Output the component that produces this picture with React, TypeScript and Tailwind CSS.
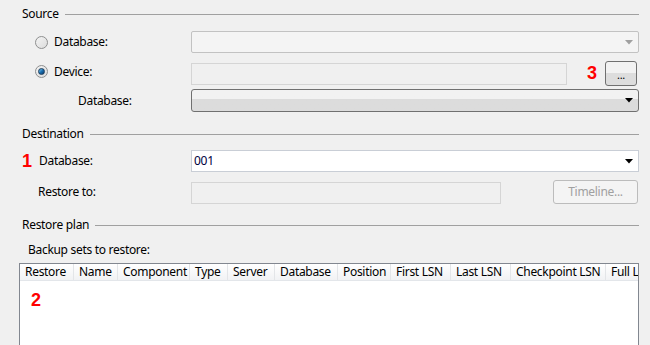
import React from "react";

const font = { fontFamily: '"Noto Sans", "Segoe UI", sans-serif' };

const SectionHeader = ({ title }: { title: string }) => (
    <div className="flex items-center h-[16px] pl-[22px] pr-[11px] gap-[6px]">
        <span className="text-[12px] leading-[16px] text-black">{title}</span>
        <div className="flex-1 h-px bg-[#a0a0a0]" />
    </div>
);

const Arrow = ({ disabled }: { disabled?: boolean }) => (
    <svg width="8" height="5" viewBox="0 0 8 5" className="mr-[5px]">
        <path d="M0 0 H8 L4 4.5 Z" fill={disabled ? "#a0a0a0" : "#000"} />
    </svg>
);

const Radio = ({ checked }: { checked?: boolean }) => (
    <div className="w-[13px] h-[13px] rounded-full border border-[#8e8f8f] bg-gradient-to-br from-[#f4f4f4] to-[#dcdcdc] flex items-center justify-center">
        {checked && <div className="w-[7px] h-[7px] rounded-full bg-gradient-to-br from-[#7ad1f7] via-[#1a6fb0] to-[#0b3a6a] border border-[#1b3c5c]" />}
    </div>
);

const Red = ({ n }: { n: string }) => (
    <span className="text-[18px] leading-[18px] font-bold text-[#ff0000] tracking-normal" style={{ fontFamily: '"Liberation Sans", Arial, sans-serif' }}>{n}</span>
);

const columns = [
    { name: "Restore", w: 54 },
    { name: "Name", w: 44 },
    { name: "Component", w: 72 },
    { name: "Type", w: 38 },
    { name: "Server", w: 47 },
    { name: "Database", w: 63 },
    { name: "Position", w: 53 },
    { name: "First LSN", w: 60 },
    { name: "Last LSN", w: 60 },
    { name: "Checkpoint LSN", w: 95 },
    { name: "Full LSN", w: 80 },
];

export default function App() {
    return (
        <div className="w-[650px] h-[345px] bg-[#f0f0f0] overflow-hidden text-[12px] tracking-[-0.3px] text-black flex flex-col" style={font}>
            <div className="mt-[6px]">
                <SectionHeader title="Source" />
            </div>

            <div className="mt-[9px] flex items-center h-[22px] pr-[11px]">
                <div className="w-[191px] flex items-center pl-[35px] gap-[6px]">
                    <Radio />
                    <span>Database:</span>
                </div>
                <div className="flex-1 h-[22px] rounded-[2px] border border-[#c2c2c2] bg-[#f4f4f4] flex items-center justify-end">
                    <Arrow disabled />
                </div>
            </div>

            <div className="mt-[8px] flex items-center h-[25px] pr-[13px]">
                <div className="w-[191px] flex items-center pl-[35px] gap-[6px] mb-[4px]">
                    <Radio checked />
                    <span>Device:</span>
                </div>
                <div className="w-[376px] h-[22px] border border-[#d5d5d5] bg-[#f0f0f0]" />
                <div className="ml-[20px] w-[18px]">
                    <Red n="3" />
                </div>
                <div className="w-[32px] h-[25px] rounded-[3px] border border-[#707070] bg-gradient-to-b from-[#f2f2f2] from-50% to-[#dddddd] to-50% flex items-center justify-center text-[11px] leading-[11px] pt-[2px]">
                    ...
                </div>
            </div>

            <div className="mt-[3px] flex items-center h-[23px] pr-[11px]">
                <div className="w-[191px] pl-[78px]">Database:</div>
                <div className="flex-1 h-[23px] rounded-[3px] border border-[#707070] bg-gradient-to-b from-[#f2f2f2] from-45% to-[#dcdcdc] to-45% flex items-center justify-end">
                    <Arrow />
                </div>
            </div>

            <div className="mt-[14px]">
                <SectionHeader title="Destination" />
            </div>

            <div className="mt-[8px] flex items-center h-[22px] pr-[11px]">
                <div className="w-[191px] flex items-center pl-[22px] gap-[7px]">
                    <Red n="1" />
                    <span>Database:</span>
                </div>
                <div className="flex-1 h-[22px] border border-[#c9ced6] bg-white flex items-center justify-between pl-[2px]">
                    <span className="text-[#000040]">001</span>
                    <Arrow />
                </div>
            </div>

            <div className="mt-[8px] flex items-end h-[24px] pr-[12px]">
                <div className="w-[191px] pl-[38px] self-center">Restore to:</div>
                <div className="w-[310px] h-[22px] border border-[#d5d5d5] bg-[#f0f0f0]" />
                <div className="ml-auto w-[85px] h-[24px] rounded-[3px] border border-[#bcbcbc] bg-[#f4f4f4] flex items-center justify-center text-[#a0a0a0]">
                    Timeline...
                </div>
            </div>

            <div className="mt-[13px]">
                <SectionHeader title="Restore plan" />
            </div>

            <div className="mt-[9px] h-[16px] leading-[16px] pl-[28px]">Backup sets to restore:</div>

            <div className="mt-[5px] ml-[19px] w-[620px] flex-1 border border-[#828790] border-b-0 bg-white overflow-hidden flex flex-col">
                <div className="flex h-[17px] bg-gradient-to-b from-white to-[#f1f2f4] border-b border-[#e3e6ea] overflow-hidden">
                    {columns.map(c => (
                        <div
                            key={c.name}
                            className="shrink-0 h-full border-r border-[#e3e5e8] pl-[5px] leading-[16px] whitespace-nowrap overflow-hidden"
                            style={{ width: c.w }}
                        >
                            {c.name}
                        </div>
                    ))}
                </div>
                <div className="pl-[11px] pt-[10px]">
                    <Red n="2" />
                </div>
            </div>
        </div>
    );
}
